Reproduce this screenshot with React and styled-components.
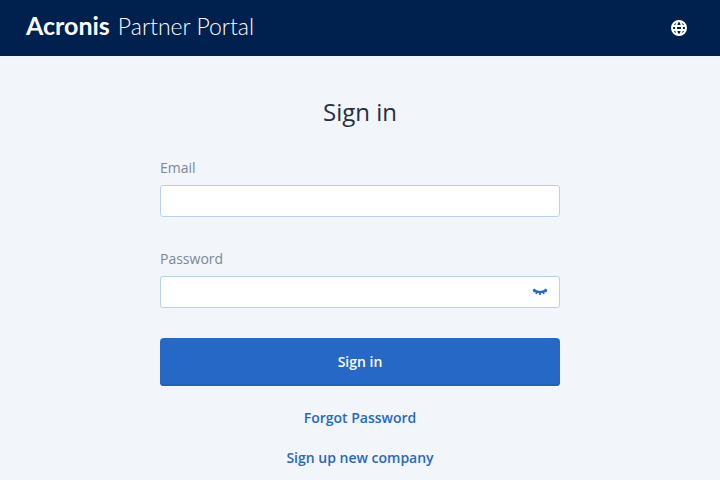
import React, { useState } from "react";
import styled, { createGlobalStyle } from "styled-components";

const GlobalStyle = createGlobalStyle`
  *, *::before, *::after { box-sizing: border-box; }
  body {
    margin: 0;
    background: #f2f5fa;
    color: #243143;
    font-family: "Open Sans", sans-serif;
    font-size: 14px;
    line-height: 24px;
  }
`;

const Header = styled.header`
  display: flex;
  align-items: center;
  justify-content: space-between;
  height: 56px;
  padding: 0 32px 0 26px;
  background: #00204d;
  color: #fff;
`;

const Brand = styled.a`
  display: flex;
  align-items: baseline;
  gap: 8px;
  padding-bottom: 6px;
  color: #fff;
  font-family: Lato, sans-serif;
  font-size: 25px;
  line-height: 32px;
  text-decoration: none;
`;

const BrandName = styled.span`
  font-weight: 700;
`;

const ProductName = styled.span`
  font-size: 23px;
  font-weight: 300;
`;

const IconButton = styled.button`
  display: flex;
  padding: 0;
  border: 0;
  background: none;
  color: ${(p) => p.$color};
  cursor: pointer;
`;

const Main = styled.main`
  width: 100%;
  max-width: 432px;
  margin: 0 auto;
  padding: 40px 16px 8px;
`;

const Title = styled.h1`
  margin: 0 0 28px;
  font-size: 24px;
  font-weight: 400;
  line-height: 32px;
  text-align: center;
`;

const Form = styled.form`
  display: flex;
  flex-direction: column;
`;

const Field = styled.div`
  display: flex;
  flex-direction: column;
  gap: 5px;
  margin-bottom: 30px;
`;

const Label = styled.label`
  color: #7c8798;
`;

const InputBox = styled.div`
  display: flex;
  align-items: center;
  height: 32px;
  padding-right: 11px;
  border: 1px solid #b8d0ee;
  border-radius: 3px;
  background: #fff;
  &:focus-within { border-color: #2668c5; }
`;

const Input = styled.input`
  flex: 1;
  min-width: 0;
  height: 100%;
  padding: 0 12px;
  border: 0;
  outline: 0;
  background: none;
  color: inherit;
  font: inherit;
`;

const SubmitButton = styled.button`
  height: 48px;
  border: 0;
  border-radius: 4px;
  background: #2668c5;
  box-shadow: inset 0 -2px 0 #2260b9;
  color: #fff;
  font: inherit;
  font-weight: 600;
  cursor: pointer;
`;

const Links = styled.nav`
  display: flex;
  flex-direction: column;
  align-items: center;
  gap: 16px;
  margin-top: 20px;
`;

const TextLink = styled.a`
  color: #2668c5;
  font-weight: 600;
  text-decoration: none;
`;

function GlobeIcon() {
  return (
    <svg width="18" height="18" viewBox="0 0 18 18" fill="none" stroke="currentColor" strokeWidth="2" aria-hidden="true">
      <circle cx="9" cy="9" r="7" />
      <ellipse cx="9" cy="9" rx="3" ry="7" />
      <path d="M2 7h14M2 11h14" />
    </svg>
  );
}

function ClosedEyeIcon() {
  return (
    <svg width="16" height="16" viewBox="0 0 16 16" fill="none" stroke="currentColor" aria-hidden="true">
      <path d="M1.4 5.2C4.4 9 11.6 9 14.6 5.2" strokeWidth="2.2" />
      <path d="M8 8v3M4.9 7.5l-.8 2.5M11.1 7.5l.8 2.5M2.8 6.2L1.8 8M13.2 6.2l1 1.8" strokeWidth="1.8" />
    </svg>
  );
}

export default function App() {
  const [visible, setVisible] = useState(false);
  return (
    <>
      <GlobalStyle />
      <Header>
        <Brand href="#">
          <BrandName>Acronis</BrandName>
          <ProductName>Partner Portal</ProductName>
        </Brand>
        <IconButton type="button" $color="#fff" aria-label="Change language">
          <GlobeIcon />
        </IconButton>
      </Header>
      <Main>
        <Title>Sign in</Title>
        <Form onSubmit={(e) => e.preventDefault()}>
          <Field>
            <Label htmlFor="email">Email</Label>
            <InputBox>
              <Input id="email" type="email" autoComplete="username" />
            </InputBox>
          </Field>
          <Field>
            <Label htmlFor="password">Password</Label>
            <InputBox>
              <Input id="password" type={visible ? "text" : "password"} autoComplete="current-password" />
              <IconButton
                type="button"
                $color="#2668c5"
                aria-label="Show password"
                aria-pressed={visible}
                onClick={() => setVisible(!visible)}
              >
                <ClosedEyeIcon />
              </IconButton>
            </InputBox>
          </Field>
          <SubmitButton type="submit">Sign in</SubmitButton>
        </Form>
        <Links>
          <TextLink href="#forgot">Forgot Password</TextLink>
          <TextLink href="#signup">Sign up new company</TextLink>
        </Links>
      </Main>
    </>
  );
}
